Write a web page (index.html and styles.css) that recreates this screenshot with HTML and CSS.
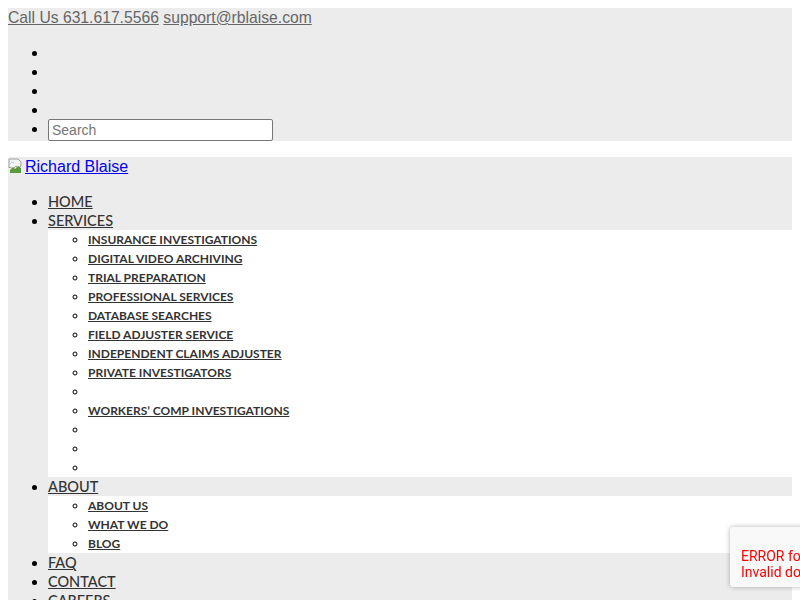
FILE: index.html
```html
<!DOCTYPE html>
<html lang="en">
<head>
    <meta charset="UTF-8">
    <meta name="viewport" content="width=device-width, initial-scale=1.0">
    <title>Richard Blaise</title>
    <link rel="stylesheet" href="styles.css">
</head>
<body>

<!-- Top contact bar -->
<div class="topbar">
    <a href="#" class="top-link">Call Us 631.617.5566</a> <a href="#" class="top-link">support@rblaise.com</a>
    <ul class="social-list">
        <li></li>
        <li></li>
        <li></li>
        <li></li>
        <li><input type="text" class="search-input" placeholder="Search"></li>
    </ul>
</div>

<!-- Header with logo and menu -->
<div class="header">
    <a href="#" class="logo-link"><svg class="broken-img" width="16" height="16" viewBox="0 0 16 16"><path d="M1 1h9l3 3v4l-3 2-2-2-3 3-3-2-1 1z" fill="#f4f4f4" stroke="#a0a0a0"/><path d="M2 12l3-3 2 2 3-3 3 2v5H2z" fill="#5a9a3c"/><path d="M2 6l2-2 2 1" fill="none" stroke="#b9d3e8"/></svg>Richard Blaise</a>

    <ul class="main-menu">
        <li><a href="#">HOME</a></li>
        <li><a href="#">SERVICES</a>
            <ul class="sub-menu">
                <li><a href="#">INSURANCE INVESTIGATIONS</a></li>
                <li><a href="#">DIGITAL VIDEO ARCHIVING</a></li>
                <li><a href="#">TRIAL PREPARATION</a></li>
                <li><a href="#">PROFESSIONAL SERVICES</a></li>
                <li><a href="#">DATABASE SEARCHES</a></li>
                <li><a href="#">FIELD ADJUSTER SERVICE</a></li>
                <li><a href="#">INDEPENDENT CLAIMS ADJUSTER</a></li>
                <li><a href="#">PRIVATE INVESTIGATORS</a></li>
                <li></li>
                <li><a href="#">WORKERS’ COMP INVESTIGATIONS</a></li>
                <li></li>
                <li></li>
                <li></li>
            </ul>
        </li>
        <li><a href="#">ABOUT</a>
            <ul class="sub-menu">
                <li><a href="#">ABOUT US</a></li>
                <li><a href="#">WHAT WE DO</a></li>
                <li><a href="#">BLOG</a></li>
            </ul>
        </li>
        <li><a href="#">FAQ</a></li>
        <li><a href="#">CONTACT</a></li>
        <li><a href="#">CAREERS</a></li>
    </ul>
</div>

<!-- reCAPTCHA error badge -->
<div class="captcha-badge">
    ERROR for site owner:<br>
    Invalid domain for site key
</div>

</body>
</html>
```

FILE: styles.css
```css
body {
    margin: 8px;
    font-family: "Liberation Sans", Arial, sans-serif;
    font-size: 16px;
    background-color: #ffffff;
}

.topbar {
    background-color: #ececec;
    line-height: 19px;
}

.top-link {
    color: #666666;
    font-size: 15.7px;
}

.social-list {
    margin: 16px 0;
    padding-left: 40px;
    line-height: 19px;
}

.search-input {
    width: 225px;
    height: 22px;
    box-sizing: border-box;
    margin: 0;
    padding: 1px 3px;
    border: 1px solid #767676;
    border-radius: 2px;
    font-family: "Liberation Sans", Arial, sans-serif;
    font-size: 14px;
    vertical-align: top;
}

.search-input::placeholder {
    color: #757575;
}

.header {
    background-color: #ececec;
    min-height: 460px;
}

.logo-link {
    color: #0000ee;
    line-height: 19px;
}

.broken-img {
    vertical-align: -2px;
    margin-right: 1px;
}

.main-menu {
    margin: 16px 0 0;
    padding-left: 40px;
    font-family: Lato, "Open Sans", sans-serif;
    font-size: 14.5px;
    font-weight: 500;
    line-height: 19px;
}

.main-menu a {
    color: #333333;
}

.sub-menu {
    margin: 0;
    padding-left: 40px;
    background-color: #ffffff;
    font-size: 12px;
    font-weight: 700;
}

.sub-menu li {
    height: 19px;
}

.captcha-badge {
    position: fixed;
    left: 730px;
    top: 527px;
    width: 256px;
    height: 60px;
    box-sizing: border-box;
    padding: 21px 0 0 11px;
    background-color: #f9f9f9;
    border-radius: 3px;
    box-shadow: 0 0 5px rgba(0, 0, 0, 0.3);
    color: #ff0000;
    font-family: Roboto, sans-serif;
    font-size: 14px;
    line-height: 16px;
}
```
